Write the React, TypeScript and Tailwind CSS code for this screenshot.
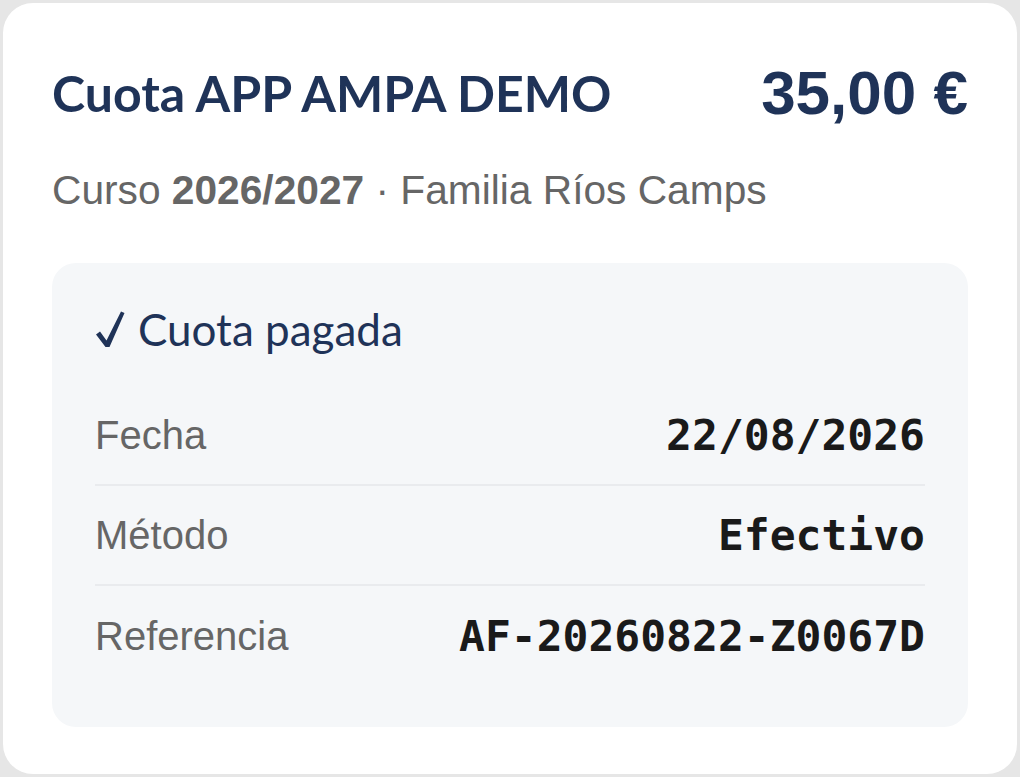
const ROWS = [
  { label: "Fecha", value: "22/08/2026" },
  { label: "Método", value: "Efectivo" },
  { label: "Referencia", value: "AF-20260822-Z0067D" },
];

function Check() {
  return (
    <svg width="30" height="37" viewBox="0 0 30 37" className="shrink-0">
      <path d="M1 23.5 L5 20.5 L11.5 29.5 L26 0.5 L29.5 2 L14.5 36 L10.5 36 Z" fill="#1f3358" strokeLinejoin="round" />
    </svg>
  );
}

export default function App() {
  return (
    <div className="h-[777px] w-[1020px] bg-[#e6e6e6] p-[3px]">
      <div className="h-full rounded-[30px] bg-white px-[49px] pt-[53px]">
        {/* Header */}
        <div className="flex items-center justify-between">
          <h1 className="font-['Lato',sans-serif] text-[50px] leading-[1.2] font-bold text-[#1f3358]">
            Cuota APP AMPA DEMO
          </h1>
          <span className="font-['Liberation_Sans',Arial,sans-serif] text-[62px] leading-[1.2] font-bold text-[#1f3358]">
            35,00 €
          </span>
        </div>
        <p className="mt-[36px] font-['Liberation_Sans',Arial,sans-serif] text-[40.7px] leading-[1.2] text-[#666666]">
          Curso <span className="font-bold">2026/2027</span> · Familia Ríos Camps
        </p>

        {/* Payment panel */}
        <div className="mt-[48px] rounded-[24px] bg-[#f5f7f9] px-[43px] pt-[40px] pb-[41px]">
          <div className="flex items-center gap-[13px] font-['Lato',sans-serif] text-[44px] leading-[1.2] text-[#1f3358]">
            <Check />
            <span>Cuota pagada</span>
          </div>
          <div className="mt-[30px]">
            {ROWS.map((row, i) => (
              <div
                key={row.label}
                className={`flex h-[100px] items-center justify-between ${
                  i < ROWS.length - 1 ? "border-b-2 border-[#e9ebee]" : ""
                }`}
              >
                <span className="font-['Liberation_Sans',Arial,sans-serif] text-[40px] text-[#666666]">
                  {row.label}
                </span>
                <span className="font-['DejaVu_Sans_Mono',monospace] text-[43px] font-bold text-[#1a1a1a]">
                  {row.value}
                </span>
              </div>
            ))}
          </div>
        </div>
      </div>
    </div>
  );
}
